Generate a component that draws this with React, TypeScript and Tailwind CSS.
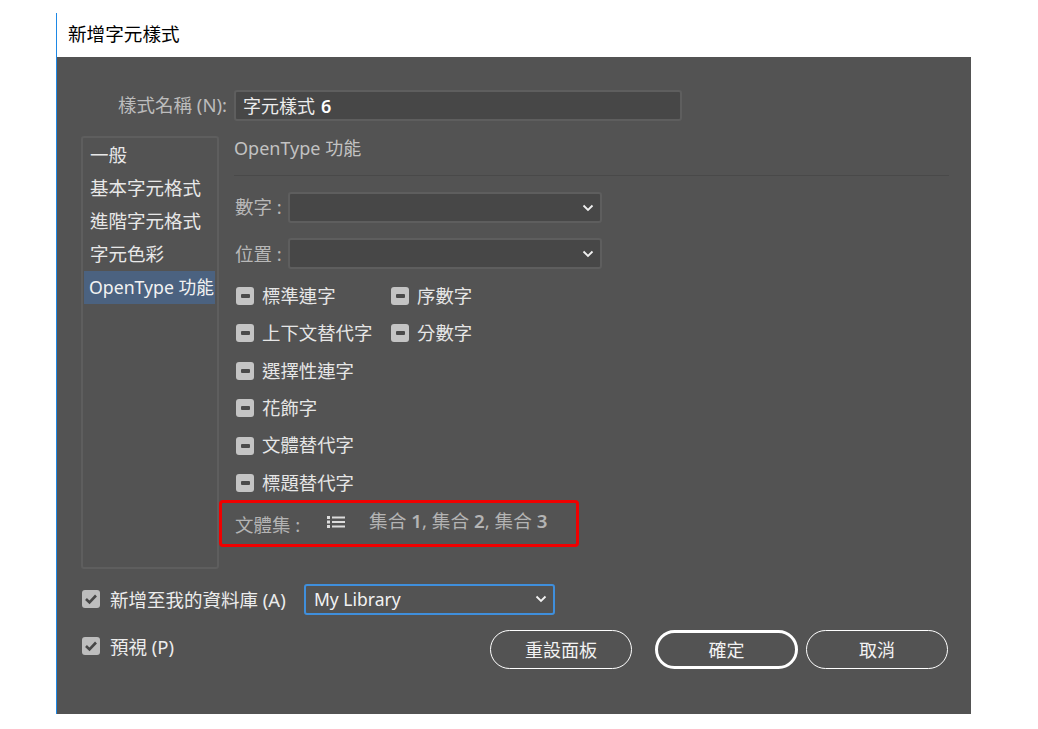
import type { ReactNode } from "react";

const fontStack = { fontFamily: '"Noto Sans", "Noto Sans CJK TC", sans-serif' };

function Chevron() {
  return (
    <svg width="12" height="8" viewBox="0 0 12 8">
      <path d="M1.5 1.5 L6 6 L10.5 1.5" fill="none" stroke="currentColor" strokeWidth="1.8" />
    </svg>
  );
}

function MixedBox() {
  return (
    <div className="flex h-[18px] w-[18px] shrink-0 items-center justify-center rounded-[3px] bg-[#c4c4c4]">
      <div className="h-[4px] w-[9px] rounded-[1px] bg-[#4a4a4a]" />
    </div>
  );
}

function CheckedBox() {
  return (
    <div className="flex h-[18px] w-[18px] shrink-0 items-center justify-center rounded-[3px] bg-[#bdbdbd]">
      <svg width="14" height="12" viewBox="0 0 14 12">
        <path d="M2 6 L5.5 9.5 L12 2.5" fill="none" stroke="#474747" strokeWidth="2.6" />
      </svg>
    </div>
  );
}

function Feature({ label, width }: { label: string; width?: string }) {
  return (
    <div className={`flex h-[18px] items-center gap-[8px] ${width ?? ""}`}>
      <MixedBox />
      <span className="whitespace-nowrap text-[18.4px] leading-none text-[#e6e6e6]">{label}</span>
    </div>
  );
}

function DarkSelect({ label, textClass }: { label: string; textClass?: string }) {
  return (
    <div className="flex items-center">
      <span className={`w-[54px] whitespace-nowrap pl-[1px] text-[18.5px] leading-none text-[#b8b8b8] ${textClass ?? ""}`}>
        {label}
      </span>
      <div className="flex h-[31px] w-[314px] items-center justify-end rounded-[3px] border-2 border-[#5e5e5e] bg-[#474747] pr-[6px] text-[#f0f0f0]">
        <Chevron />
      </div>
    </div>
  );
}

function PillButton({ children, width, strong }: { children: ReactNode; width: string; strong?: boolean }) {
  return (
    <div
      className={`flex h-[39px] items-center justify-center rounded-[20px] border-white text-[18px] leading-none text-[#f2f2f2] ${width} ${
        strong ? "border-[3px]" : "border-[1.5px]"
      }`}
    >
      {children}
    </div>
  );
}

export default function App() {
  const sideItems = ["一般", "基本字元格式", "進階字元格式", "字元色彩"];

  return (
    <div className="h-[729px] w-[1038px] overflow-hidden bg-white pl-[56px] pt-[13px]" style={fontStack}>
      <div className="w-[915px] border-l-[1.5px] border-[#1e88e5]">
        <div className="flex h-[44px] items-center pb-[2px] pl-[11px] text-[18.6px] leading-none text-black">新增字元樣式</div>

        <div className="h-[657px] bg-[#535353] pl-[24px] pt-[33px]">
          {/* name */}
          <div className="flex h-[31px] items-center">
            <span className="w-[146px] whitespace-nowrap text-right text-[18.5px] leading-none text-[#bcbcbc]">
              樣式名稱 (N):
            </span>
            <div className="ml-[7px] flex h-[31px] w-[448px] items-center rounded-[3px] border-2 border-[#5e5e5e] bg-[#474747] pl-[7px] text-[18px] leading-none text-[#ececec]">
              字元樣式 <span className="ml-[6px] font-semibold text-white">6</span>
            </div>
          </div>

          <div className="mt-[15px] flex h-[432px]">
            {/* category list */}
            <div className="h-[433px] w-[138px] rounded-[3px] border-2 border-[#5e5e5e] pl-[1px] pr-[1px] pt-[1px]">
              {sideItems.map((item) => (
                <div key={item} className="flex h-[33px] items-center pl-[6px] text-[18.5px] leading-none text-[#e8e8e8]">
                  {item}
                </div>
              ))}
              <div className="mr-[1px] flex h-[33px] items-center whitespace-nowrap bg-[#4b6280] pl-[5px] text-[17.7px] leading-none text-[#f2f2f2]">
                OpenType 功能
              </div>
            </div>

            {/* OpenType pane */}
            <div className="w-[730px]">
              <div className="ml-[15px] h-[40px] border-b border-[#494949] pt-[2px] text-[18px] leading-[20px] text-[#c2c2c2]">
                OpenType 功能
              </div>
              <div className="ml-[15px] mt-[16px] flex flex-col gap-[15px]">
                <DarkSelect label="數字 :" />
                <DarkSelect label="位置 :" textClass="pt-[2px]" />
              </div>
              <div className="ml-[17px] mt-[18px] flex flex-col gap-[19.4px]">
                <div className="flex">
                  <Feature label="標準連字" width="w-[155px]" />
                  <Feature label="序數字" />
                </div>
                <div className="flex">
                  <Feature label="上下文替代字" width="w-[155px]" />
                  <Feature label="分數字" />
                </div>
                <Feature label="選擇性連字" />
                <Feature label="花飾字" />
                <Feature label="文體替代字" />
                <Feature label="標題替代字" />
              </div>

              {/* font sets */}
              <div className="mt-[8px] flex h-[47px] w-[360px] items-start rounded-[4px] border-[3px] border-[#f00000]">
                <span className="mt-[13px] w-[105px] whitespace-nowrap pl-[13px] text-[18.5px] leading-none text-[#b4b4b4]">
                  文體集 :
                </span>
                <svg width="18" height="12" viewBox="0 0 18 12" className="mt-[13px] text-[#dcdcdc]">
                  <path d="M0 0h3v3H0zM0 4.5h3v3H0zM0 9h3v3H0zM5 .5h13v2H5zM5 5h13v2H5zM5 9.5h13v2H5z" fill="currentColor" />
                </svg>
                <span className="ml-[24px] mt-[9px] whitespace-nowrap text-[18.7px] leading-none text-[#b4b4b4]">
                  集合 <b className="font-semibold">1</b>, 集合 <b className="font-semibold">2</b>, 集合{" "}
                  <b className="font-semibold">3</b>
                </span>
              </div>
            </div>
          </div>

          {/* library row */}
          <div className="ml-[1px] mt-[16px] flex h-[30px] items-center">
            <CheckedBox />
            <span className="ml-[10px] w-[194px] whitespace-nowrap pt-[2px] text-[18.5px] leading-none text-[#ececec]">
              新增至我的資料庫 (A)
            </span>
            <div className="flex h-[31px] w-[251px] items-center justify-between rounded-[3px] border-2 border-[#3f8fdc] pl-[8px] pr-[6px] text-[17.5px] leading-none text-[#f2f2f2]">
              <span className="pt-[2px]">My Library</span>
              <Chevron />
            </div>
          </div>

          {/* preview + buttons */}
          <div className="mt-[16px] flex items-start">
            <div className="ml-[1px] mt-[6px] flex w-[408px] items-center">
              <CheckedBox />
              <span className="ml-[10px] whitespace-nowrap pt-[2px] text-[18.5px] leading-none text-[#ececec]">預視 (P)</span>
            </div>
            <PillButton width="w-[142px]">重設面板</PillButton>
            <div className="ml-[23px]">
              <PillButton width="w-[143px]" strong>
                確定
              </PillButton>
            </div>
            <div className="ml-[8px]">
              <PillButton width="w-[142px]">取消</PillButton>
            </div>
          </div>
        </div>
      </div>
    </div>
  );
}
